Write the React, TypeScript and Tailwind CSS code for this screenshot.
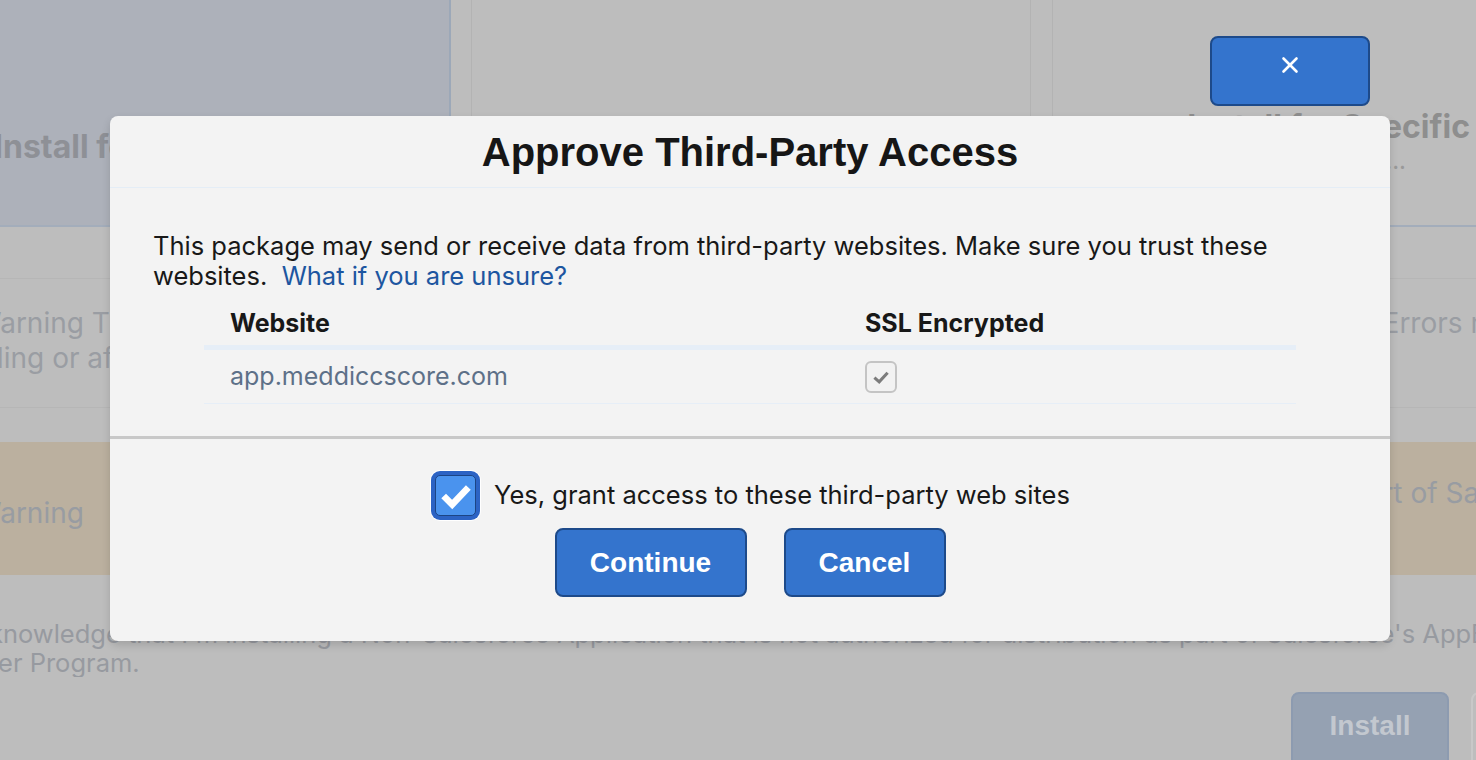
import { X } from 'lucide-react';

const sans = "font-['Inter','Noto_Sans',sans-serif]";
const arial = "font-['Liberation_Sans',Arial,sans-serif]";

function BigCheckbox() {
  return (
    <div className="w-[51px] h-[51px] rounded-[10px] bg-white p-px shrink-0">
      <div className="w-full h-full rounded-[9px] bg-[#2c63c4] p-[4px]">
        <div className="w-full h-full rounded-[5px] border border-[#1c4585] bg-[#4a93ee] flex items-center justify-center">
          <svg viewBox="0 0 40 40" className="w-[38px] h-[38px]">
            <path d="M7 20 L16 29 L33 11" fill="none" stroke="#ffffff" strokeWidth="7" strokeLinecap="butt" strokeLinejoin="miter" />
          </svg>
        </div>
      </div>
    </div>
  );
}

function SmallCheckbox() {
  return (
    <div className="w-[32px] h-[32px] rounded-[6px] border-2 border-[#c4c4c4] bg-[#f2f2f2] flex items-center justify-center">
      <svg viewBox="0 0 20 20" className="w-[24px] h-[24px]">
        <path d="M4.5 10.5 L8.5 14 L15.5 6.5" fill="none" stroke="#7c7c7c" strokeWidth="2.6" />
      </svg>
    </div>
  );
}

function Background() {
  return (
    <div className={`w-full h-full flex flex-col ${sans}`}>
      <div className="h-[227px] flex border-b-2 border-[#a3adbb] shrink-0">
        <div className="w-[451px] bg-[#adb1ba] border-r-2 border-[#9ca8b8] overflow-hidden flex items-center">
          <div className="ml-[-6px] mt-[68px] text-[32px] font-bold text-[#8e9096] whitespace-nowrap">Install for All Users</div>
        </div>
        <div className="w-[20px]" />
        <div className="w-[560px] border-x border-[#b3b3b3]" />
        <div className="w-[21px]" />
        <div className="flex-1 border-l border-[#b3b3b3] overflow-hidden flex flex-col items-end pr-[6px] pt-[108px]">
          <div className="text-[32px] font-bold text-[#8e8e8e] leading-[38px] whitespace-nowrap">Install for Specific</div>
          <div className="text-[24px] text-[#999] leading-[30px] pr-[64px]">...</div>
        </div>
      </div>
      <div className="h-[52px] border-b border-[#b6b6b6] shrink-0" />
      <div className="h-[129px] border-b border-[#b6b6b6] shrink-0 flex justify-between pt-[27px] overflow-hidden">
        <div className="text-[28px] leading-[35px] text-[#9a9da3] whitespace-nowrap">
          <div className="ml-[-26px]">Warning&nbsp;This</div>
          <div className="ml-[-62px]">Loading or after</div>
        </div>
        <div className="mr-[-50px] text-[28px] leading-[35px] text-[#9a9da3] whitespace-nowrap">Errors may</div>
      </div>
      <div className="h-[34px] shrink-0" />
      <div className="h-[133px] bg-[#bbb09f] shrink-0 flex justify-between overflow-hidden">
        <div className="ml-[-26px] mt-[50px] text-[28px] text-[#989ca2] whitespace-nowrap">Warning</div>
        <div className="mr-[-41px] mt-[30px] text-[28px] text-[#989ca2] whitespace-nowrap">part of Sales</div>
      </div>
      <div className="shrink-0 pt-[44px] text-[25.5px] leading-[29px] text-[#979aa0] whitespace-nowrap overflow-hidden">
        <div className="ml-[-54px]">I acknowledge that I'm installing a Non-Salesforce Application that is not authorized for distribution as part of Salesforce's AppExchange Partner Program.</div>
        <div className="ml-[-66px]">Partner Program.</div>
      </div>
      <div className="shrink-0 flex justify-end gap-[22px] pt-[15px] mr-[-153px]">
        <div className="w-[158px] h-[80px] rounded-[8px] bg-[#95a1b2] border-2 border-[#8d9bb0] flex items-center justify-center pb-[12px]">
          <span className={`${arial} text-[28px] font-bold text-[#c3c8cf]`}>Install</span>
        </div>
        <div className="w-[158px] h-[80px] rounded-[8px] bg-[#bdbdbd] border-2 border-[#c8c8c8]" />
      </div>
    </div>
  );
}

export default function App() {
  return (
    <div className="w-[1476px] h-[760px] relative overflow-hidden bg-[#bdbdbd]">
      <Background />

      <button className="absolute left-[1210px] top-[36px] w-[160px] h-[70px] rounded-[8px] bg-[#3474cd] border-2 border-[#1d4a8a] flex justify-center pt-[14px]">
        <X className="w-[26px] h-[26px] text-white" strokeWidth={2.4} />
      </button>

      <div className={`absolute left-[110px] top-[116px] w-[1280px] rounded-[8px] bg-[#f3f3f3] shadow-[0_4px_8px_rgba(0,0,0,0.15)] ${sans}`}>
        <div className="h-[72px] border-b border-[#e4edf6] flex items-center justify-center">
          <h1 className={`${arial} text-[40px] font-bold text-[#161616] leading-none`}>Approve Third-Party Access</h1>
        </div>

        <div className="px-[43px] pt-[43px] pb-[32px]">
          <p className="text-[25.5px] leading-[30px] text-[#181818]">
            This package may send or receive data from third-party websites. Make sure you trust these websites.&nbsp;{' '}
            <a className="text-[#1d56a0]">What if you are unsure?</a>
          </p>

          <div className="w-[1092px] mx-auto mt-[5px]">
            <div className="h-[43px] flex items-center pt-[6px] border-b-[5px] border-[#e6eef7] box-content">
              <div className="w-[635px] pl-[26px] text-[25px] font-bold text-[#181818]">Website</div>
              <div className="pl-[26px] text-[25px] font-bold text-[#181818]">SSL Encrypted</div>
            </div>
            <div className="h-[53px] flex items-center border-b border-[#e6eef7] box-content">
              <div className="w-[635px] pl-[26px] text-[25px] text-[#5d7088]">app.meddiccscore.com</div>
              <div className="pl-[26px]">
                <SmallCheckbox />
              </div>
            </div>
          </div>
        </div>

        <div className="h-[3px] bg-[#c8c8c8]" />

        <div className="pt-[31px] pb-[44px] flex flex-col items-center">
          <label className="flex items-center gap-[13px]">
            <BigCheckbox />
            <span className="text-[25.5px] text-[#181818]">Yes, grant access to these third-party web sites</span>
          </label>
          <div className="flex gap-[37px] mt-[7px]">
            <button className={`w-[192px] h-[69px] rounded-[8px] bg-[#3474cd] border-2 border-[#1d4a8a] ${arial} text-[28px] font-bold text-white`}>Continue</button>
            <button className={`w-[162px] h-[69px] rounded-[8px] bg-[#3474cd] border-2 border-[#1d4a8a] ${arial} text-[28px] font-bold text-white`}>Cancel</button>
          </div>
        </div>
      </div>
    </div>
  );
}
